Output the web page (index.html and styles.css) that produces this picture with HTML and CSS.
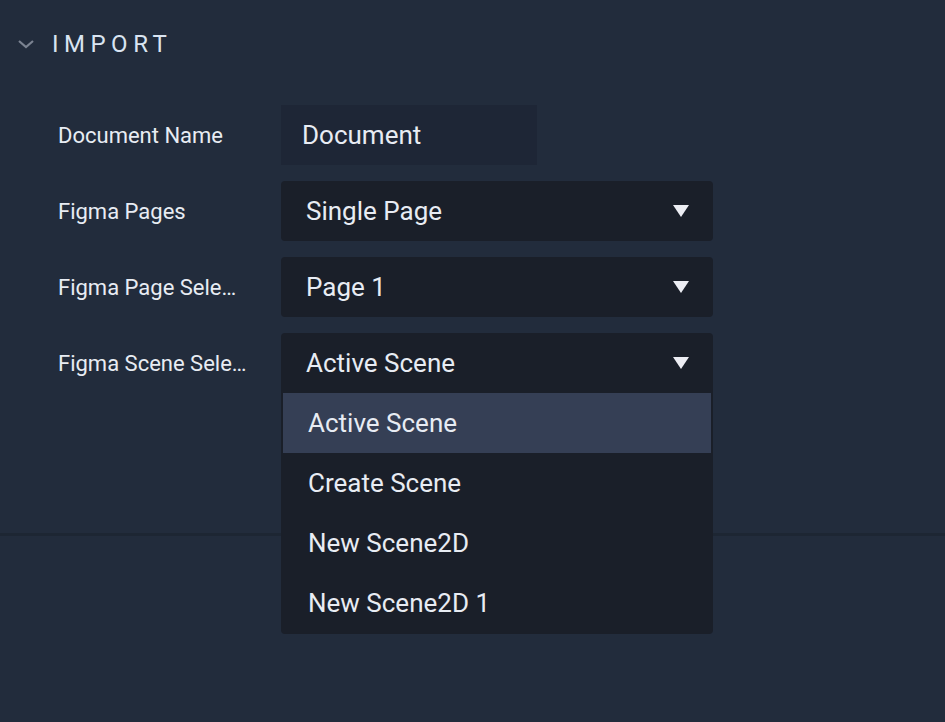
FILE: index.html
```html
<!DOCTYPE html>
<html>
<head>
<meta charset="utf-8">
<link rel="stylesheet" href="styles.css">
</head>
<body>
<div class="panel">
  <div class="header">
    <svg class="chev" width="18" height="10" viewBox="0 0 18 10"><path d="M2 2 L9 8 L16 2" fill="none" stroke="#7b8391" stroke-width="2.2"/></svg>
    <span class="title">IMPORT</span>
  </div>
  <div class="rows">
    <div class="row">
      <div class="label">Document Name</div>
      <div class="input">Document</div>
    </div>
    <div class="row">
      <div class="label">Figma Pages</div>
      <div class="select"><span>Single Page</span><span class="arrow"></span></div>
    </div>
    <div class="row">
      <div class="label">Figma Page Selection</div>
      <div class="select"><span>Page 1</span><span class="arrow"></span></div>
    </div>
    <div class="row">
      <div class="label">Figma Scene Selection</div>
      <div class="select-wrap">
        <div class="select open"><span>Active Scene</span><span class="arrow"></span></div>
        <ul class="menu">
          <li class="item active">Active Scene</li>
          <li class="item">Create Scene</li>
          <li class="item">New Scene2D</li>
          <li class="item">New Scene2D 1</li>
        </ul>
      </div>
    </div>
  </div>
</div>
<div class="divider"></div>
<div class="lower"></div>
</body>
</html>
```
FILE: styles.css
```css
html, body {
  margin: 0;
  padding: 0;
  background: #222c3c;
  font-family: Roboto, "Noto Sans", sans-serif;
  color: #e8ecf3;
}
.panel {
  position: relative;
  z-index: 2;
  height: 533px;
}
.header {
  display: flex;
  align-items: center;
  height: 88px;
  padding-left: 17px;
}
.chev {
  margin-right: 17px;
}
.title {
  font-size: 24px;
  letter-spacing: 5.5px;
  color: #d9e4f1;
}
.rows {
  display: flex;
  flex-direction: column;
  gap: 16px;
  padding-top: 17px;
}
.row {
  display: flex;
  align-items: center;
  height: 60px;
}
.label {
  width: 189px;
  margin-left: 58px;
  margin-right: 34px;
  font-size: 22px;
  white-space: nowrap;
  overflow: hidden;
  text-overflow: ellipsis;
}
.input {
  width: 235px;
  height: 60px;
  padding-left: 21px;
  display: flex;
  align-items: center;
  background: #1e2636;
  font-size: 26px;
}
.select-wrap {
  position: relative;
}
.select {
  box-sizing: border-box;
  width: 432px;
  height: 60px;
  padding: 0 24px 0 25px;
  display: flex;
  align-items: center;
  justify-content: space-between;
  background: #1a1f29;
  border-radius: 4px;
  font-size: 26px;
}
.select.open {
  border-radius: 4px 4px 0 0;
}
.arrow {
  width: 0;
  height: 0;
  border-left: 8px solid transparent;
  border-right: 8px solid transparent;
  border-top: 12px solid #ecedf3;
}
.menu {
  position: absolute;
  z-index: 10;
  top: 60px;
  left: 0;
  width: 432px;
  margin: 0;
  padding: 0 0 1px;
  list-style: none;
  background: #1a1f29;
  border-radius: 0 0 4px 4px;
  box-sizing: border-box;
}
.item {
  height: 60px;
  display: flex;
  align-items: center;
  padding-left: 27px;
  font-size: 26px;
}
.item.active {
  margin: 0 2px;
  padding-left: 25px;
  background: #353f55;
}
.divider {
  position: relative;
  z-index: 1;
  height: 3px;
  background: #1d2633;
}
.lower {
  height: 186px;
}
```
